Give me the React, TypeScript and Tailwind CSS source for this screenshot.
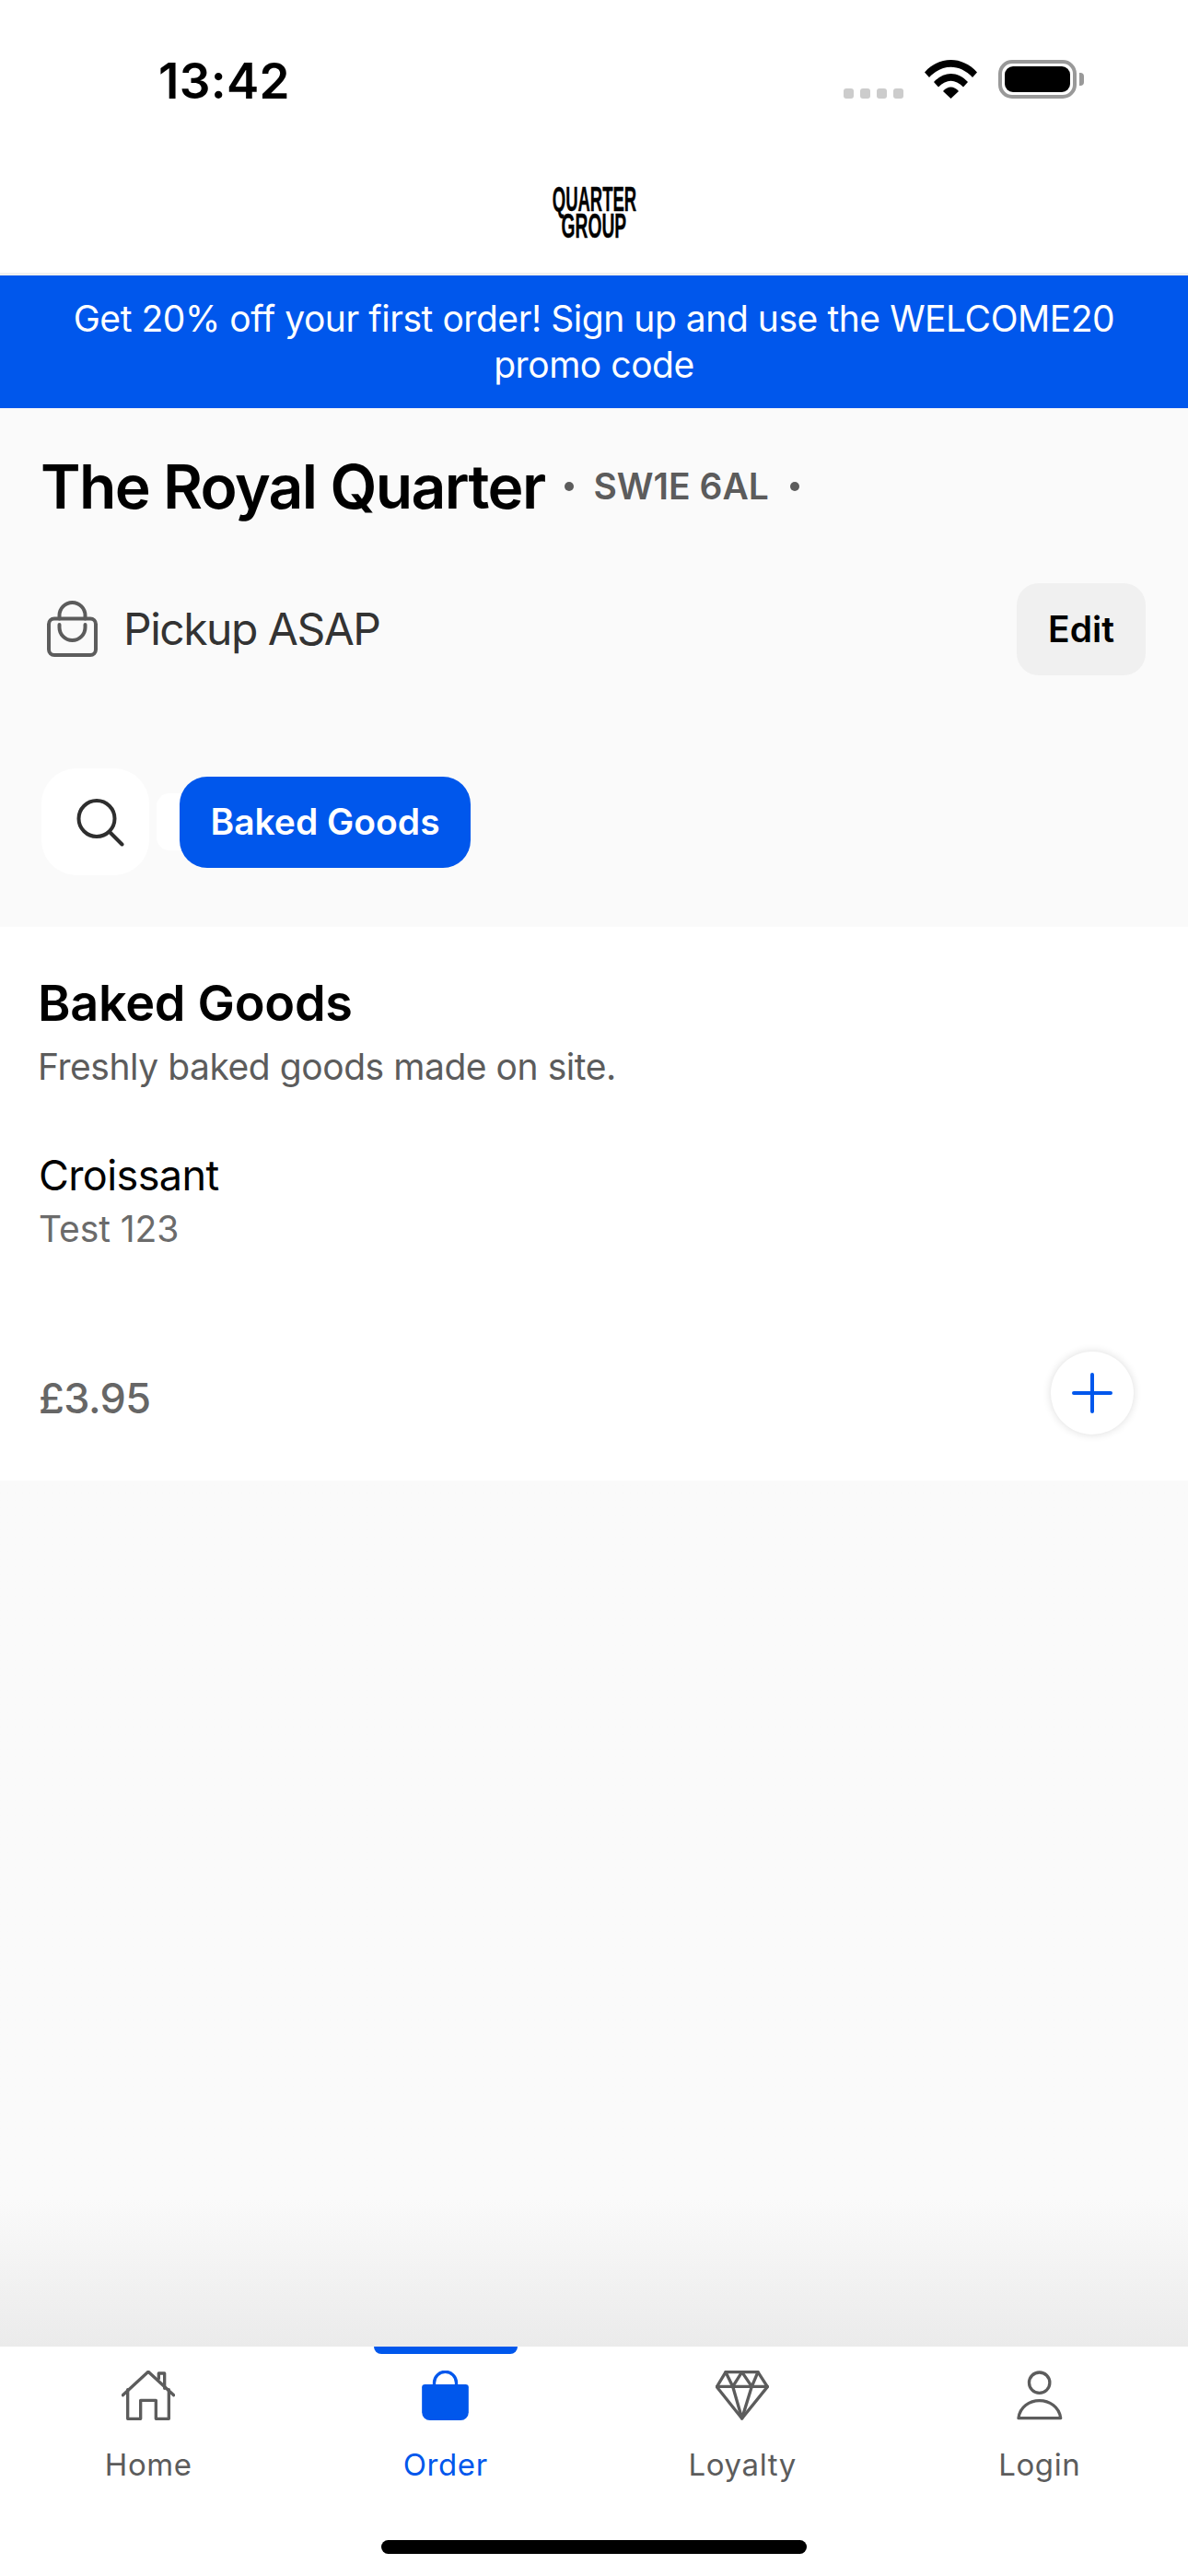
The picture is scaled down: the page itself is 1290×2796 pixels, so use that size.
const BLUE = "#0057ec";

function Home() {
  return (
    <svg width="58" height="54" viewBox="98 130 174 162" fill="none" stroke="#5c5c5c" strokeWidth="10" strokeLinecap="round" strokeLinejoin="round">
      <path d="M102 210 L185 134 L268 210" />
      <path d="M118 192 V287 H160 V227 H210 V287 H252 V192" />
      <path d="M219 156 V139 H238 V188" />
    </svg>
  );
}
function Bag() {
  return (
    <svg width="51" height="54" viewBox="1072 130 152 162">
      <path d="M1112 178 V170 a36 36 0 0 1 72 0 V178" fill="none" stroke={BLUE} strokeWidth="10" />
      <path d="M1082 175 H1214 a10 10 0 0 1 10 10 V266 a26 26 0 0 1 -26 26 H1098 a26 26 0 0 1 -26 -26 V185 a10 10 0 0 1 10 -10 Z" fill={BLUE} />
    </svg>
  );
}
function Diamond() {
  return (
    <svg width="58" height="54" viewBox="172 130 174 162" fill="none" stroke="#5c5c5c" strokeWidth="10" strokeLinecap="round" strokeLinejoin="round">
      <path d="M205 135 H310 L341 183 L258 286 L176 183 Z" />
      <path d="M176 182 H341" />
      <path d="M205 135 L228 182 L258 135 L290 182 L310 135" />
      <path d="M228 182 L258 286 L290 182" />
    </svg>
  );
}
function Person() {
  return (
    <svg width="50" height="54" viewBox="1145 130 152 162" fill="none" stroke="#5c5c5c" strokeWidth="10" strokeLinejoin="round">
      <circle cx="1220" cy="169" r="34" />
      <path d="M1151 286 C1155 248 1188 228 1220 228 C1252 228 1286 248 1290 286 Z" />
    </svg>
  );
}

function Tab({ label, active, children }: { label: string; active?: boolean; children: React.ReactNode }) {
  return (
    <div className="flex flex-1 flex-col items-center">
      <div className="flex h-[8px] w-[156px] rounded-b-[8px]" style={{ background: active ? BLUE : "transparent" }} />
      <div className="mt-[18px] flex h-[54px] items-center justify-center">{children}</div>
      <div className={`mt-[28px] text-[33px] leading-[40px] font-normal tracking-[0.6px] ${active ? "text-[#0057ec]" : "text-[#5c5c5c]"}`}>{label}</div>
    </div>
  );
}

export default function App() {
  return (
    <div className="flex h-[2796px] w-[1290px] flex-col overflow-hidden bg-[#fafafa] font-['Inter',sans-serif]">
      <header className="flex h-[296px] shrink-0 flex-col bg-white">
        <div className="flex h-[170px] items-start justify-between pt-[65px] pr-[113px] pl-[172px]">
          <span className="text-[53px] leading-[46px] font-semibold tracking-[0.3px] text-black">13:42</span>
          <div className="flex items-end">
            <div className="flex gap-[7px] pb-[0px]">
              <span className="h-[11px] w-[11px] rounded-[3px] bg-[#cccccc]" />
              <span className="h-[11px] w-[11px] rounded-[3px] bg-[#cccccc]" />
              <span className="h-[11px] w-[11px] rounded-[3px] bg-[#cccccc]" />
              <span className="h-[11px] w-[11px] rounded-[3px] bg-[#cccccc]" />
            </div>
            <svg className="ml-[23px]" width="57" height="42" viewBox="0 0 57 42">
              <path d="M0 13.5 C16 -4.5 41 -4.5 57 13.5 L52 19 C38 4 19 4 5 19 Z" fill="#000" />
              <path d="M10 24 C21 12 36 12 47 24 L42 29.5 C33 20.5 24 20.5 15 29.5 Z" fill="#000" />
              <path d="M20 34 C25 28 32 28 37 34 L28.5 42 Z" fill="#000" />
            </svg>
            <div className="ml-[23px] flex items-center">
              <div className="flex h-[42px] w-[85px] rounded-[15px] border-[4px] border-[#999999] p-[3px]">
                <div className="flex-1 rounded-[9px] bg-black" />
              </div>
              <div className="ml-[3px] h-[14px] w-[5px] rounded-r-[4px] bg-[#999999]" />
            </div>
          </div>
        </div>
        <div className="flex flex-col items-center pt-[32px] font-['Liberation_Sans',sans-serif] text-[37px] leading-[29px] font-bold text-black [-webkit-text-stroke:0.4px_black]">
          <span className="inline-block scale-x-[0.5]">QUARTER</span>
          <span className="inline-block scale-x-[0.52]">GROUP</span>
        </div>
      </header>
      <div className="h-[3px] shrink-0 bg-[#f0f0f0]" />
      <div className="flex h-[144px] shrink-0 items-center justify-center bg-[#0057ec] px-[60px] text-center text-[39px] leading-[50px] tracking-[-0.45px] text-white">
        Get 20% off your first order! Sign up and use the WELCOME20 promo code
      </div>

      <section className="flex h-[563px] shrink-0 flex-col px-[45px]">
        <div className="mt-[45px] -ml-[1px] flex h-[80px] items-center">
          <h1 className="text-[66px] leading-[80px] font-semibold tracking-[-1.65px] text-black">The Royal Quarter</h1>
          <span className="ml-[22px] h-[10px] w-[10px] rounded-full bg-[#5c5c5c]" />
          <span className="ml-[21px] text-[39px] font-semibold text-[#5c5c5c]">SW1E 6AL</span>
          <span className="ml-[23px] h-[10px] w-[10px] rounded-full bg-[#5c5c5c]" />
        </div>
        <div className="mt-[65px] flex h-[100px] items-center justify-between pr-[1px]">
          <div className="flex items-center">
            <svg className="ml-[5px]" width="56" height="62" viewBox="0 0 56 62" fill="none" stroke="#5c5c5c" strokeWidth="4" strokeLinecap="round" strokeLinejoin="round">
              <rect x="3" y="19.5" width="51" height="39.5" rx="6" />
              <path d="M14.5 19.5 V16 a14 14 0 0 1 28 0 V19.5" />
              <path d="M14.5 26 V29 a14 14 0 0 0 28 0 V26" />
            </svg>
            <span className="ml-[28px] text-[48px] tracking-[-1.5px] text-[#333333]">Pickup ASAP</span>
          </div>
          <div className="flex h-[100px] w-[140px] items-center justify-center rounded-[24px] bg-[#f0f0f0] text-[39px] font-semibold text-black">Edit</div>
        </div>
        <div className="mt-[101px] flex items-center">
          <div className="flex h-[116px] w-[117px] items-center justify-center rounded-[38px] bg-white">
            <svg className="ml-[10px]" width="53" height="53" viewBox="0 0 53 53" fill="none" stroke="#2e2e2e" strokeWidth="4" strokeLinecap="round">
              <circle cx="23" cy="22.5" r="19.5" />
              <path d="M37.5 37.5 L50.5 50.5" />
            </svg>
          </div>
          <div className="ml-[8px] h-[62px] w-[40px] rounded-l-[14px] bg-white" />
          <div className="-ml-[15px] flex h-[99px] w-[316px] items-center justify-center rounded-[30px] bg-[#0057ec] text-[39px] font-semibold text-white">Baked Goods</div>
        </div>
      </section>

      <section className="flex h-[601px] shrink-0 flex-col bg-white pl-[42px] pr-[59px]">
        <h2 className="mt-[47px] -ml-[1px] text-[54px] leading-[72px] font-semibold tracking-[-0.3px] text-black">Baked Goods</h2>
        <p className="mt-[8px] -ml-[1px] text-[39px] leading-[50px] tracking-[-0.45px] text-[#5c5c5c]">Freshly baked goods made on site.</p>
        <div className="mt-[64px] text-[45px] leading-[58px] font-normal tracking-[-0.6px] text-black">Croissant</div>
        <div className="mt-[5px] text-[39px] leading-[48px] tracking-[-0.1px] text-[#6b6b6b]">Test 123</div>
        <div className="mt-[109px] flex items-center justify-between">
          <span className="mt-[12px] text-[45px] font-medium tracking-[-0.6px] text-[#666666]">£3.95</span>
          <div className="flex h-[90px] w-[90px] items-center justify-center rounded-full bg-white shadow-[0_0_10px_rgba(0,0,0,0.14)]">
            <svg width="44" height="44" viewBox="0 0 44 44" stroke="#0057ec" strokeWidth="4" strokeLinecap="round">
              <path d="M22 2 V42 M2 22 H42" />
            </svg>
          </div>
        </div>
      </section>

      <div className="flex-1 bg-gradient-to-b from-[#fafafa] from-[83%] to-[#ebebeb]" />

      <nav className="flex h-[249px] shrink-0 flex-col bg-white">
        <div className="flex flex-1">
          <Tab label="Home"><Home /></Tab>
          <Tab label="Order" active><Bag /></Tab>
          <Tab label="Loyalty"><Diamond /></Tab>
          <Tab label="Login"><Person /></Tab>
        </div>
        <div className="mx-auto mb-[24px] h-[15px] w-[462px] rounded-full bg-black" />
      </nav>
    </div>
  );
}
